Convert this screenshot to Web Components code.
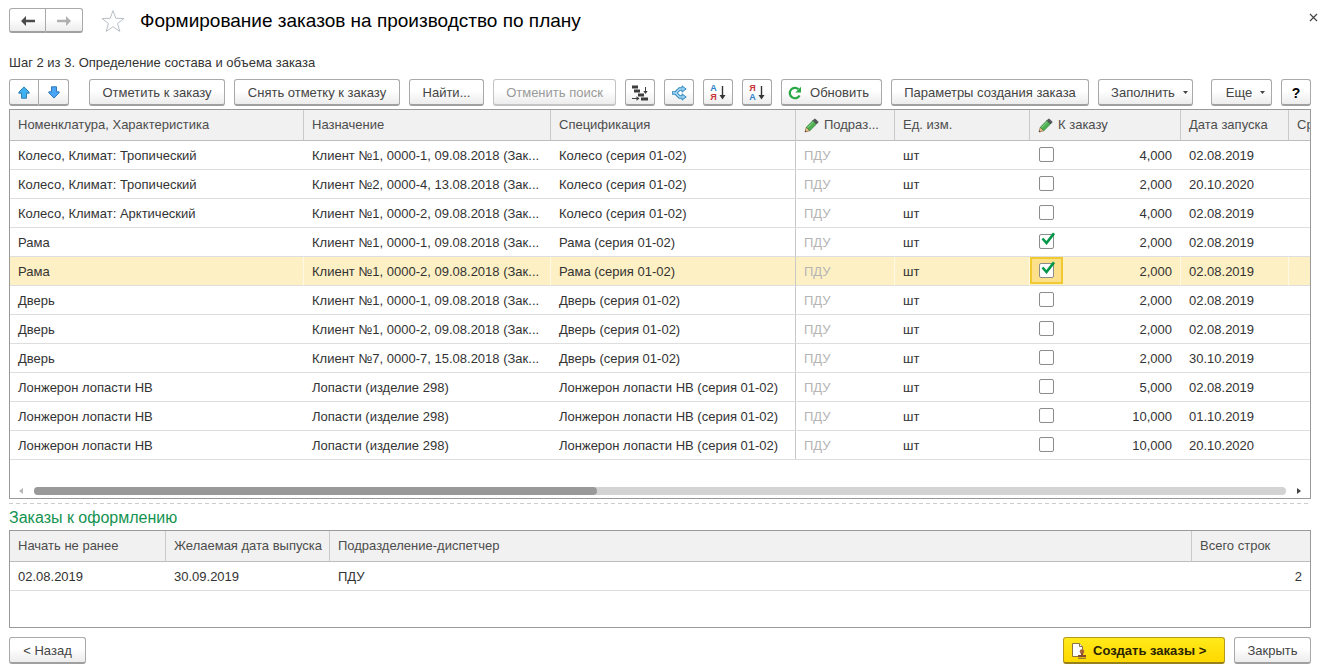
<!DOCTYPE html>
<html lang="ru">
<head>
<meta charset="utf-8">
<title>Формирование заказов на производство по плану</title>
<style>
  body {
    margin: 0;
    background: #fff;
    color: #333;
    font: 13px/16px "Liberation Sans", Arial, sans-serif;
  }
</style>
</head>
<body>
<order-wizard></order-wizard>

<script>
const ICONS = {
  back: [16, 12, '<path d="M1 6l5-5v3.7h9v2.600H6V11z" fill="#4a4a4a"/>'],
  forward: [16, 12, '<path d="M15 6l-5-5v3.7H1v2.600h9V11z" fill="#b0b0b0"/>'],
  star: [24, 24, '<path d="M12 1.6l2.8 7.7 8.2.2-6.5 5 2.3 7.9-6.8-4.7-6.8 4.7 2.3-7.9-6.5-5 8.2-.2z" fill="#fff" stroke="#b9bec6"/>'],
  close: [9, 9, '<path d="M1 1l7 7M8 1L1 8" stroke="#444" stroke-width="1.2"/>'],
  up: [12, 13, '<path d="M6 .9l5.2 5.4v.9H8.5v5h-5v-5H.8v-.9z" fill="#3fb0f0" stroke="#2b7fb5"/>'],
  down: [12, 13, '<path d="M6 12.1l5.2-5.4v-.9H8.5v-5h-5v5H.8v.9z" fill="#4aa6f5" stroke="#2f78c0"/>'],
  tree: [18, 16, '<path d="M1 .5h6v3H1zM3 4.500h6v3H3zM7 8.500h6v3H7zM10 12.500h7v3h-7z" fill="#3d3d3d"/><path d="M14.500 2v6M1 13.500h6" stroke="#3d3d3d" fill="none"/><path d="M12.300 6h4.400L14.500 9zM5.500 11.300v4.400L8.500 13.500z" fill="#3d3d3d"/>'],
  share: [16, 16, '<path d="M1 8h3.500L8.500 4H12M4.500 8l4 4H12" fill="none" stroke="#2f86bd" stroke-width="3.400"/><path d="M11 .8l4.200 3.200L11 7.200zM11 8.800l4.200 3.200-4.200 3.200z" fill="#8ccbee" stroke="#2f86bd" stroke-width=".9"/><path d="M1.700 8h3L8.500 4h3.700M4.700 8l3.800 4h3.700" fill="none" stroke="#a9daf4" stroke-width="1.600"/>'],
  refresh: [14, 14, '<path d="M11.600 9.500A5.200 5.200 0 1 1 10.400 3.100" fill="none" stroke="#28a745" stroke-width="2.200"/><path d="M13 .8v5.600H7.400z" fill="#28a745"/>'],
  pencil: [15, 15, '<path d="M1 14l1.300-4.800 3.500 3.500z" fill="#edc28d" stroke="#8a6239" stroke-width=".7"/><path d="M1 14l.4-1.600 1.200 1.200z" fill="#333"/><path d="M2.300 9.200l6.700-6.700 3.500 3.500-6.700 6.700z" fill="#4caf50" stroke="#2f7d3c" stroke-width=".7"/><path d="M3.600 9.700l6.300-6.300" stroke="#8fd68b"/><path d="M9 2.500l1.300-1.300q.6-.6 1.200 0l2.300 2.300q.6.600 0 1.200L12.500 6z" fill="#54585c" stroke="#3a3d40" stroke-width=".6"/>'],
  caret: [5, 3, '<path d="M0 0h5L2.500 3z" fill="#444"/>'],
  left: [4, 6, '<path d="M4 0v6L0 3z" fill="#b8b8b8"/>'],
  right: [4, 6, '<path d="M0 0v6l4-3z" fill="#444"/>'],
  tick: [15, 14, '<path d="M2.500 6.500l4 4.500 7.500-9.700" fill="none" stroke="#009848" stroke-width="2.600"/>'],
  document: [16, 17, '<path d="M1.500 1.500h7l3 3v10h-10z" fill="#fff" stroke="#8a7340"/><path d="M8.500 1.500v3h3" fill="#eee" stroke="#8a7340"/><circle cx="11" cy="9.600" r="2.300" fill="#a8623a"/><path d="M10 11h2v2h3v2H7v-2h3z" fill="#8c4a2a"/><path d="M7 16.200h8" stroke="#7a5a40"/>']
};

function define(name, html, setup) {
  const template = document.createElement('template');
  template.innerHTML = html;
  customElements.define(name, class extends HTMLElement {
    constructor() {
      super();
      this.attachShadow({ mode: 'open' }).append(template.content.cloneNode(true));
    }
    connectedCallback() {
      if (setup) setup(this, this.shadowRoot);
    }
  });
}

define('ui-icon', `<style>
  :host { display: inline-flex; flex: none; }
  svg { display: block; }
</style>`, (host, root) => {
  const [w, h, body] = ICONS[host.getAttribute('name')];
  root.innerHTML += `<svg width="${w}" height="${h}" viewBox="0 0 ${w} ${h}" aria-hidden="true">${body}</svg>`;
});

/* Sorting glyph: two stacked letters beside a downward arrow */
define('sort-icon', `<style>
  :host { display: flex; align-items: center; gap: 2px; }
  span { display: grid; font: bold 9px/9px "Liberation Sans", Arial, sans-serif; }
  .a { color: #2f7fc8; }
  .z { color: #c8323c; }
  :host([desc]) .a { order: 2; }
  svg { display: block; }
</style>
<span><b class="a">А</b><b class="z">Я</b></span>
<svg width="7" height="14" viewBox="0 0 7 14" aria-hidden="true"><path d="M3.500 0v11" stroke="#333" stroke-width="1.400"/><path d="M.5 9h6l-3 4.500z" fill="#333"/></svg>`);

define('ui-button', `<style>
  :host { display: block; flex: none; }
  button {
    box-sizing: border-box; width: 100%; height: var(--button-height, 27px); margin: 0; padding: 1px 0 0;
    display: flex; align-items: center; justify-content: center; gap: 8px;
    border: 1px solid #a9a9a9; border-bottom: 2px solid #a0a0a0; border-radius: 3px;
    background: linear-gradient(#fff 45%, #ececec);
    color: #444; font: inherit; white-space: nowrap;
  }
  button:disabled { color: #999; border-color: #c4c4c4; }
  :host([primary]) button {
    background: linear-gradient(#ffea1a, #ffd800); color: #2b2300;
    border-color: #b39a1c; border-bottom-color: #96811a; font-weight: bold;
    justify-content: flex-start; padding-left: 7px; gap: 6px;
  }
  :host([menu]) button { padding-left: 8px; }
  :host([leading]) button { padding-right: 6px; }
  :host([strong]) button { color: #000; font-weight: bold; font-size: 14px; }
  :host([first]) button { border-radius: 3px 0 0 3px; }
  :host([last]) button { border-radius: 0 3px 3px 0; border-left: 0; }
</style>
<button type="button"><slot></slot></button>`, (host, root) => {
  const button = root.querySelector('button');
  button.disabled = host.hasAttribute('disabled');
  if (host.hasAttribute('label')) button.setAttribute('aria-label', host.getAttribute('label'));
});

define('form-header', `<style>
  :host { display: flex; align-items: center; height: 27px; }
  .nav { display: flex; --button-height: 25px; }
  .nav ui-button { width: 37px; }
  .plain { border: 0; background: none; padding: 0; display: flex; }
  .star { margin: 0 15px 0 18px; }
  h1 { flex: 1; margin: 0; color: #000; font: 19px/24px "Liberation Sans", Arial, sans-serif; }
</style>
<div class="nav">
  <ui-button first label="Назад"><ui-icon name="back"></ui-icon></ui-button>
  <ui-button last label="Вперед"><ui-icon name="forward"></ui-icon></ui-button>
</div>
<button class="plain star" type="button" aria-label="Добавить в избранное"><ui-icon name="star"></ui-icon></button>
<h1><slot></slot></h1>
<slot name="close"></slot>`);

define('order-toolbar', `<style>
  :host { display: flex; gap: 9px; }
  .move { display: flex; margin-right: 11px; }
  .move ui-button, .square { width: 30px; }
  .w60 { width: 61px; } .w75 { width: 75px; } .w95 { width: 95px; } .w100 { width: 101px; }
  .w123 { width: 123px; } .w136 { width: 136px; } .w166 { width: 166px; } .w198 { width: 198px; }
  .end { margin-left: auto; }
</style>
<div class="move">
  <ui-button first label="Переместить вверх"><ui-icon name="up"></ui-icon></ui-button>
  <ui-button last label="Переместить вниз"><ui-icon name="down"></ui-icon></ui-button>
</div>
<ui-button class="w136">Отметить к заказу</ui-button>
<ui-button class="w166">Снять отметку к заказу</ui-button>
<ui-button class="w75">Найти...</ui-button>
<ui-button class="w123" disabled>Отменить поиск</ui-button>
<ui-button class="square" label="Дерево заказов"><ui-icon name="tree"></ui-icon></ui-button>
<ui-button class="square" label="Разбить строку"><ui-icon name="share"></ui-icon></ui-button>
<ui-button class="square" label="Сортировать по возрастанию"><sort-icon></sort-icon></ui-button>
<ui-button class="square" label="Сортировать по убыванию"><sort-icon desc></sort-icon></ui-button>
<ui-button class="w100" leading><ui-icon name="refresh"></ui-icon>Обновить</ui-button>
<ui-button class="w198">Параметры создания заказа</ui-button>
<ui-button class="w95" menu>Заполнить<ui-icon name="caret"></ui-icon></ui-button>
<ui-button class="w60 end" menu>Еще<ui-icon name="caret"></ui-icon></ui-button>
<ui-button class="square" strong label="Справка">?</ui-button>`);

define('tick-box', `<style>
  :host { display: flex; box-sizing: border-box; width: 33px; height: 27px; align-items: center; justify-content: center; border: 2px solid transparent; }
  :host([current]) { border-color: #f0ca30; background: #fce08c; }
  label { position: relative; display: block; height: 15px; }
  input { appearance: none; display: block; box-sizing: border-box; width: 15px; height: 15px; margin: 0; border: 1px solid #8c8c8c; border-radius: 2px; background: #fff; }
  ui-icon { position: absolute; left: 1px; top: -2px; pointer-events: none; visibility: hidden; }
  input:checked + ui-icon { visibility: visible; }
</style>
<label><input type="checkbox" aria-label="К заказу"><ui-icon name="tick"></ui-icon></label>`, (host, root) => {
  root.querySelector('input').checked = host.hasAttribute('checked');
});

const GRID_CSS = `
  :host { display: flex; flex-direction: column; box-sizing: border-box; border: 1px solid #9a9a9a; overflow: hidden; }
  table { width: 100%; table-layout: fixed; border-collapse: separate; border-spacing: 0; }
  th, td { box-sizing: border-box; padding: 0 8px; text-align: left; white-space: nowrap; overflow: hidden; }
  th { height: 31px; padding-right: 6px; font-weight: normal; color: #4d4d4d; background: #f1f1f1; border-right: 1px solid #c9c9c9; border-bottom: 1px solid #bdbdbd; }
  td { height: 29px; padding-top: 1px; border-bottom: 1px solid #dedede; }
  th:last-child { border-right: 0; }
  .num { text-align: right; }
`;

define('plan-grid', `<style>${GRID_CSS}
  :host { height: 390px; }
  .c1 { width: 294px; } .c2 { width: 247px; } .c3 { width: 245px; } .c4 { width: 99px; }
  .c5 { width: 135px; } .c6 { width: 151px; } .c7 { width: 108px; }
  td:nth-child(3) { border-right: 1px solid #c9c9c9; }
  td:nth-child(4) { color: #b5b5b5; }
  td:nth-child(6) { padding: 0 9px 0 0; }
  th:last-child { padding-right: 0; }
  .selected td { background: #fdf0c4; }
  .selected td:not(:nth-child(3)):not(:last-child) { border-right: 1px solid #fff9e6; }
  .selected td:nth-child(6) { padding-right: 8px; }
  .edit, .amount { display: flex; align-items: center; }
  .edit { gap: 5px; }
  .amount { justify-content: space-between; height: 28px; }
  .amount tick-box { align-self: flex-start; }
  .amount span { padding-top: 1px; }
  .scroll { display: flex; align-items: center; gap: 11px; margin-top: auto; padding: 0 9px 3px; height: 8px; }
  .track { flex: 1; height: 8px; border-radius: 4px; background: #d3d3d3; }
  .thumb { width: 45%; height: 8px; border-radius: 4px; background: #999; }
</style>
<table>
  <colgroup><col class="c1"><col class="c2"><col class="c3"><col class="c4"><col class="c5"><col class="c6"><col class="c7"><col></colgroup>
  <thead><tr>
    <th>Номенклатура, Характеристика</th><th>Назначение</th><th>Спецификация</th>
    <th><div class="edit"><ui-icon name="pencil"></ui-icon><span>Подраз...</span></div></th>
    <th>Ед. изм.</th>
    <th><div class="edit"><ui-icon name="pencil"></ui-icon><span>К заказу</span></div></th>
    <th>Дата запуска</th><th>Ср</th>
  </tr></thead>
  <tbody></tbody>
</table>
<div class="scroll"><ui-icon name="left"></ui-icon><div class="track"><div class="thumb"></div></div><ui-icon name="right"></ui-icon></div>`, (host, root) => {
  const rows = [
    ['Колесо, Климат: Тропический', 'Клиент №1, 0000-1, 09.08.2018 (Зак...', 'Колесо (серия 01-02)', '4,000', '02.08.2019'],
    ['Колесо, Климат: Тропический', 'Клиент №2, 0000-4, 13.08.2018 (Зак...', 'Колесо (серия 01-02)', '2,000', '20.10.2020'],
    ['Колесо, Климат: Арктический', 'Клиент №1, 0000-2, 09.08.2018 (Зак...', 'Колесо (серия 01-02)', '4,000', '02.08.2019'],
    ['Рама', 'Клиент №1, 0000-1, 09.08.2018 (Зак...', 'Рама (серия 01-02)', '2,000', '02.08.2019', 'checked'],
    ['Рама', 'Клиент №1, 0000-2, 09.08.2018 (Зак...', 'Рама (серия 01-02)', '2,000', '02.08.2019', 'checked current'],
    ['Дверь', 'Клиент №1, 0000-1, 09.08.2018 (Зак...', 'Дверь (серия 01-02)', '2,000', '02.08.2019'],
    ['Дверь', 'Клиент №1, 0000-2, 09.08.2018 (Зак...', 'Дверь (серия 01-02)', '2,000', '02.08.2019'],
    ['Дверь', 'Клиент №7, 0000-7, 15.08.2018 (Зак...', 'Дверь (серия 01-02)', '2,000', '30.10.2019'],
    ['Лонжерон лопасти НВ', 'Лопасти (изделие 298)', 'Лонжерон лопасти НВ (серия 01-02)', '5,000', '02.08.2019'],
    ['Лонжерон лопасти НВ', 'Лопасти (изделие 298)', 'Лонжерон лопасти НВ (серия 01-02)', '10,000', '01.10.2019'],
    ['Лонжерон лопасти НВ', 'Лопасти (изделие 298)', 'Лонжерон лопасти НВ (серия 01-02)', '10,000', '20.10.2020']
  ];
  root.querySelector('tbody').innerHTML = rows.map(([item, purpose, spec, qty, date, state = '']) =>
    `<tr class="${state.includes('current') ? 'selected' : ''}"><td>${item}</td><td>${purpose}</td><td>${spec}</td><td>ПДУ</td><td>шт</td>` +
    `<td><div class="amount"><tick-box ${state}></tick-box><span>${qty}</span></div></td><td>${date}</td><td></td></tr>`).join('');
});

define('summary-grid', `<style>${GRID_CSS}
  :host { height: 98px; }
  .c1 { width: 156px; } .c2 { width: 164px; } .c4 { width: 118px; }
</style>
<table>
  <colgroup><col class="c1"><col class="c2"><col><col class="c4"></colgroup>
  <thead><tr><th>Начать не ранее</th><th>Желаемая дата выпуска</th><th>Подразделение-диспетчер</th><th>Всего строк</th></tr></thead>
  <tbody><tr><td>02.08.2019</td><td>30.09.2019</td><td>ПДУ</td><td class="num">2</td></tr></tbody>
</table>`);

define('order-wizard', `<style>
  :host { display: block; padding: 7px 11px 6px 9px; }
  .close { border: 0; background: none; padding: 0; margin: 0 -7px 6px 0; display: flex; }
  .step { margin: 21px 0 8px; }
  order-toolbar { margin-bottom: 3px; }
  .split { border: 0; height: 1px; margin: 4px 0 5px; background: repeating-linear-gradient(90deg, #ccc 0 4px, transparent 4px 7px); }
  h2 { margin: 0 0 3px; color: #149350; font: 16px/18px "Liberation Sans", Arial, sans-serif; }
  footer { display: flex; gap: 9px; margin-top: 9px; }
  .back, .cancel { width: 77px; }
  .create { width: 162px; margin-left: auto; }
</style>
<form-header>Формирование заказов на производство по плану
  <button class="close" slot="close" type="button" aria-label="Закрыть форму"><ui-icon name="close"></ui-icon></button>
</form-header>
<p class="step">Шаг 2 из 3. Определение состава и объема заказа</p>
<order-toolbar></order-toolbar>
<plan-grid></plan-grid>
<hr class="split">
<h2>Заказы к оформлению</h2>
<summary-grid></summary-grid>
<footer>
  <ui-button class="back">&lt; Назад</ui-button>
  <ui-button class="create" primary><ui-icon name="document"></ui-icon>Создать заказы &gt;</ui-button>
  <ui-button class="cancel">Закрыть</ui-button>
</footer>`);
</script>
</body>
</html>
